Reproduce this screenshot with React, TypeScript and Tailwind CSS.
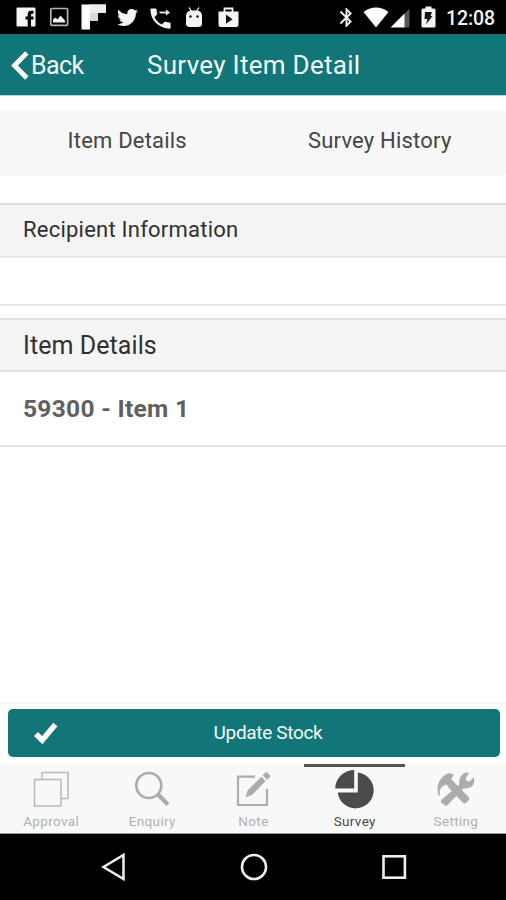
import React from "react";
import { FaTwitter } from "react-icons/fa";
import { MdBluetooth, MdPhone } from "react-icons/md";

function StatusBar() {
  return (
    <div className="h-[34px] bg-black flex items-center justify-between pl-[16px] pr-[11px] text-[#f4f4f4]">
      <div className="flex items-center">
        <svg className="w-[20px] h-[20px]" viewBox="0 0 20 20">
          <path fill="currentColor" d="M1.500 0.500h17a1 1 0 0 1 1 1v17a1 1 0 0 1-1 1h-3.500v-7h2.500v-3h-2.500v-1.500q0-1.300 1.300-1.300h1.200v-3h-2.500q-3.300 0-3.300 3.800v2h-2.200v3h2.200v7h-10.200a1 1 0 0 1-1-1v-17a1 1 0 0 1 1-1z" />
        </svg>
        <svg className="w-[20px] h-[20px] ml-[13px]" viewBox="0 0 20 20">
          <rect x="1.800" y="1.500" width="16.800" height="16.800" rx="1" fill="none" stroke="#b4b4b4" strokeWidth="1.700" />
          <path fill="currentColor" d="M4 15.500v-3l2.500-2 2 2 3-4 4.500 5v2z" />
        </svg>
        <svg className="w-[25px] h-[26px] ml-[12px]" viewBox="0 0 25 26">
          <path fill="#fff" d="M0.500 0.500h24.500v8.500h-8v8h-8v8.500h-8.500z" />
          <path fill="#d9d9d9" d="M9 9h8v8h-8z" />
          <path fill="#eeeeee" d="M9 0.500h16v8.500h-16z" />
        </svg>
        <FaTwitter className="w-[21px] h-[21px] ml-[11px]" />
        <div className="relative ml-[9px] w-[24px] h-[25px]">
          <MdPhone className="w-[27px] h-[27px]" />
          <svg className="absolute left-[12px] top-[4px] w-[11px] h-[7px]" viewBox="0 0 11 7">
            <path d="M0.500 3.500h8" stroke="currentColor" strokeWidth="1.800" />
            <path d="M7 0.500l4 3-4 3z" fill="currentColor" />
          </svg>
        </div>
        <svg className="w-[18px] h-[21px] ml-[14px]" viewBox="0 0 18 21">
          <path d="M4 0.500l3 4.500M14 0.500l-3 4.500" stroke="currentColor" strokeWidth="1.300" />
          <path fill="currentColor" d="M1 9q0-5 5-5.500h6q5 0.500 5 5.500v8q0 3-4 3h-8q-4 0-4-3z" />
          <circle cx="5.500" cy="9.500" r="1.200" fill="#111" />
          <circle cx="12.500" cy="9.500" r="1.200" fill="#111" />
        </svg>
        <svg className="w-[21px] h-[21px] ml-[15px]" viewBox="0 0 21 21">
          <path fill="none" stroke="currentColor" strokeWidth="1.800" d="M6.500 5v-3.500h8v3.500" />
          <path fill="currentColor" d="M0.500 4.500h20v13q0 2.500-2 2.500h-16q-2 0-2-2.500z" />
          <path fill="#111" d="M8 7.500l6.500 4.700-6.500 4.500z" />
        </svg>
      </div>
      <div className="flex items-center">
        <MdBluetooth className="w-[23px] h-[23px]" />
        <svg className="w-[26px] h-[21px] ml-[5px]" viewBox="0 0 26 21">
          <path fill="#fff" d="M0.500 5Q6 0.500 13 0.500T25.500 5L13 20.500z" />
        </svg>
        <svg className="w-[20px] h-[20px] ml-[1px] mt-[1px]" viewBox="0 0 20 20">
          <path fill="#555" d="M14 6.500l5.500-6v19h-5.500z" />
          <path fill="#fff" d="M0.500 19.500l14-14v14z" />
        </svg>
        <svg className="w-[15px] h-[22px] ml-[11px]" viewBox="0 0 15 22">
          <path fill="currentColor" d="M4.500 0.500h6v2h2.500q1.500 0 1.500 1.500v16q0 1.500-1.500 1.500h-11q-1.500 0-1.500-1.500v-16q0-1.500 1.500-1.500h2.500z" />
          <path fill="#111" d="M4 6h7l-1.500 4h2l-6.500 8.500 1.500-5.500h-3z" />
        </svg>
        <span className="ml-[10px] text-[19.500px] leading-[20px] font-medium w-[49px] whitespace-nowrap pt-[3px] tracking-[-0.100px]">12:08</span>
      </div>
    </div>
  );
}

function Header() {
  return (
    <header className="h-[62px] bg-[#127578] border-b border-[#b9d8da] flex items-center text-[#f2fafa] whitespace-nowrap">
      <svg className="ml-[11px] w-[18px] h-[29px] mt-[1px]" viewBox="0 0 18 29">
        <path d="M15.800 1.800L3.500 14.500L15.800 27" fill="none" stroke="#fff" strokeWidth="4.800" />
      </svg>
      <span className="ml-[2px] w-[116px] text-[25px] tracking-[-0.600px] pt-[2px]">Back</span>
      <h1 className="text-[26px] tracking-[0.280px] pt-[1px]">Survey Item Detail</h1>
    </header>
  );
}

function TabItem({ label, active, children }: { label: string; active?: boolean; children: React.ReactNode }) {
  return (
    <div className={active ? "flex-1 flex flex-col items-center border-t-[3px] border-[#555] text-[#4b4b4b]" : "flex-1 flex flex-col items-center border-t-[3px] border-transparent text-[#b0b0b0]"}>
      <svg className="w-[44px] h-[44px] mt-[1px]" viewBox="0 0 44 44">{children}</svg>
      <span className="text-[13.500px] leading-[16px] mt-[1px] ml-[1px] tracking-[0.350px]">{label}</span>
    </div>
  );
}

export default function App() {
  return (
    <div className="w-[506px] h-[900px] bg-white flex flex-col overflow-hidden font-['Roboto',sans-serif] text-[#303030]">
      <StatusBar />
      <Header />
      <div className="mt-[14px] h-[66px] shrink-0 bg-[#f7f7f7] rounded-[4px] flex text-[22px] tracking-[0.200px] whitespace-nowrap text-center pb-[5px] pl-[1px] items-center text-[#444]">
        <span className="flex-1">Item Details</span>
        <span className="flex-1">Survey History</span>
      </div>
      <div className="mt-[27px] h-[55px] shrink-0 border-t-2 border-[#dfdfdf] border-b-2 border-b-[#e7e7e7] bg-[#f4f4f4] pl-[23px] flex items-center text-[22px] tracking-[0.230px] pb-[3px]">Recipient Information</div>
      <div className="h-[48px] shrink-0 border-b-2 border-[#e5e5e5]" />
      <div className="mt-[12px] h-[54px] shrink-0 border-t-2 border-b-2 border-[#e1e1e1] bg-[#f4f4f4] pl-[23px] pt-[2px] flex items-center text-[25px] tracking-[0.080px]">Item Details</div>
      <div className="h-[75px] shrink-0 border-b-2 border-[#e5e5e5] pl-[23px] pt-[2px] flex items-center text-[24.500px] tracking-[0.300px] font-bold text-[#606060]">59300 - Item 1</div>
      <main className="flex-1" />
      <div className="h-[62px] shrink-0 border-t-2 border-[#f5f5f5] pl-[8px] pr-[6px] pt-[5px]">
        <button className="relative w-full h-[48px] rounded-[5px] bg-[#127578] flex items-center justify-center text-[19px] tracking-[-0.330px] text-[#f2fafa] pl-[28px]">
          <svg className="absolute left-[26px] top-[13px] w-[24px] h-[22px]" viewBox="0 0 24 22">
            <path d="M2 12L8.200 18.200L21.300 2.500" fill="none" stroke="#fff" strokeWidth="5.500" />
          </svg>
          Update Stock
        </button>
      </div>
      <nav className="h-[70px] shrink-0 bg-[#f8f8f8] border-b border-[#999] flex">
        <TabItem label="Approval">
          <g fill="none" stroke="#b8b8b8" strokeWidth="1.500">
            <path d="M13 11V4.500H39V30.500H33" />
            <rect x="5.500" y="11.500" width="26.500" height="26.500" />
          </g>
        </TabItem>
        <TabItem label="Enquiry">
          <circle cx="18.800" cy="17.500" r="12.500" fill="none" stroke="#acacac" strokeWidth="2.700" />
          <path d="M27.500 26L38 36.500" stroke="#acacac" strokeWidth="4.200" />
        </TabItem>
        <TabItem label="Note">
          <g transform="translate(-6 -6) scale(0.333333)">
            <path d="M90 44H39V129H126V80" fill="none" stroke="#acacac" strokeWidth="6.500" />
            <path fill="#acacac" d="M62 106L68 85L109 44L122 57L82 98zM113 40L122 31Q126 30 130 35L135 40Q138 44 135 46L126 53z" />
          </g>
        </TabItem>
        <TabItem label="Survey" active>
          <path fill="currentColor" d="M22.200 2V20.500H3.200A19 18.500 0 0 1 22.200 2z" />
          <path fill="currentColor" d="M25.800 4.500A18 18 0 1 1 5.800 24.500H25.800z" />
        </TabItem>
        <TabItem label="Setting">
          <g transform="translate(-1.400 -4) scale(0.333333)" fill="#acacac">
            <path d="M21 96Q15 76 20 60Q26 42 44 30Q55 25 66 32L59 46L70 57L111 99Q116 104 110 110L104 116Q99 121 94 116L54 74L45 62Q37 61 30 70Q22 78 25 94z" />
            <path d="M29 108L82 63Q84 57 83 51Q85 36 98 28Q104 24 113 27L102 42Q103 52 113 53L126 40Q131 49 126 60Q119 73 104 73L94 74L48 123Q41 128 36 121L29 116Q26 112 29 108z" />
          </g>
        </TabItem>
      </nav>
      <footer className="h-[66px] shrink-0 bg-black flex items-center pl-[101px]">
        <svg className="w-[25px] h-[28px]" viewBox="0 0 25 28">
          <path d="M22.500 2V26L2.500 14z" fill="none" stroke="#eee" strokeWidth="2.500" />
        </svg>
        <svg className="w-[28px] h-[28px] ml-[114px]" viewBox="0 0 28 28">
          <circle cx="14" cy="14" r="12" fill="none" stroke="#eee" strokeWidth="2.600" />
        </svg>
        <svg className="w-[26px] h-[26px] ml-[113px]" viewBox="0 0 26 26">
          <rect x="2.500" y="2.300" width="21.400" height="21.400" fill="none" stroke="#eee" strokeWidth="2.600" />
        </svg>
      </footer>
    </div>
  );
}
